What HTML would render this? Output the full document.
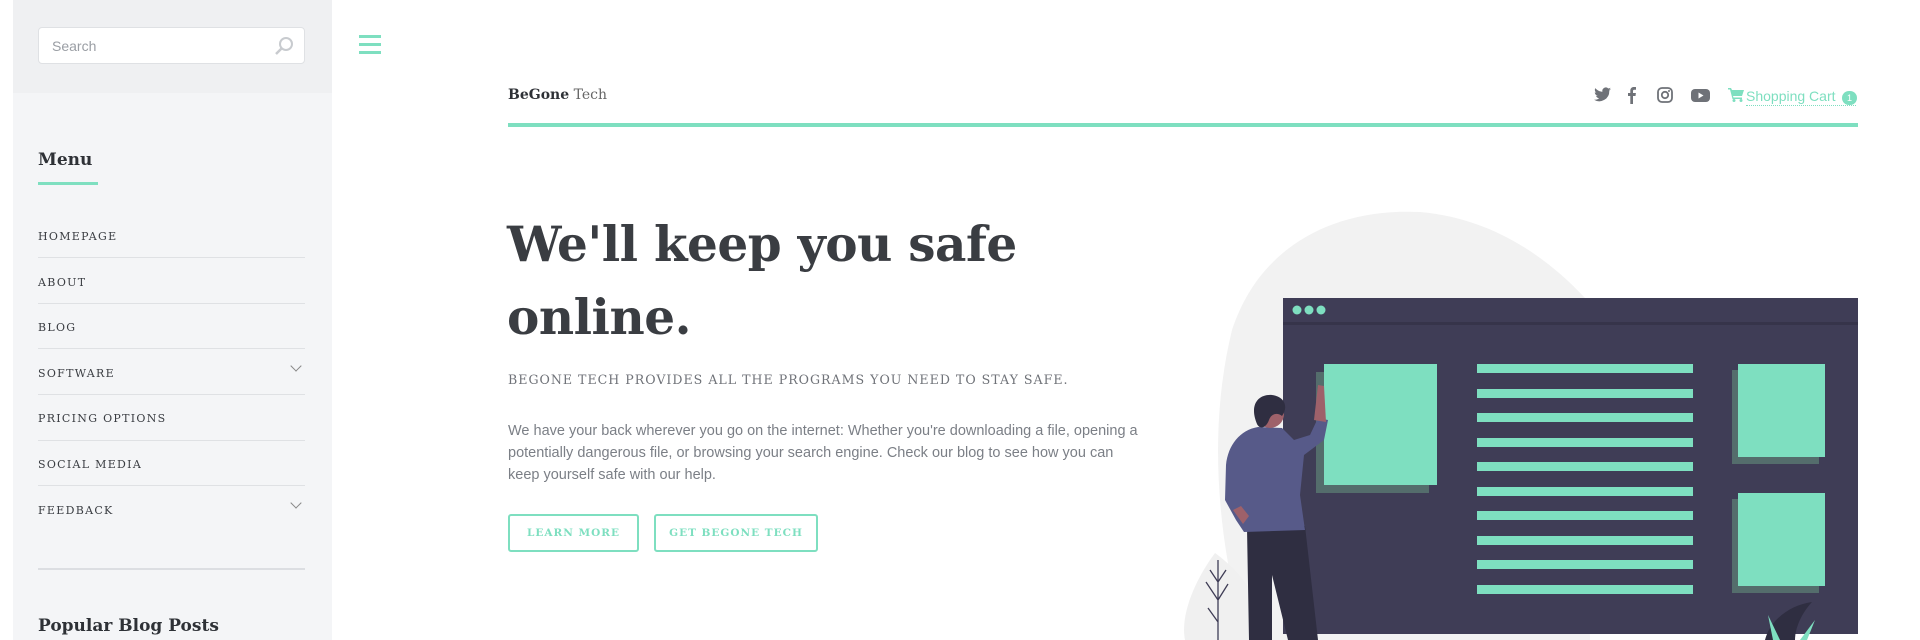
<!DOCTYPE html>
<html><head><meta charset="utf-8"><style>
*{margin:0;padding:0;box-sizing:border-box}
body{width:1920px;height:640px;overflow:hidden;background:#fff;position:relative;font-family:"Liberation Sans",sans-serif}
.a{position:absolute}
.serif{font-family:"DejaVu Serif","Liberation Serif",serif}
.side{left:13px;top:0;width:319px;height:640px;background:#f4f5f7}
.stop{left:13px;top:0;width:319px;height:93px;background:#eff0f2}
.search{left:38px;top:27px;width:267px;height:37px;background:#fff;border:1px solid #dfe1e4;border-radius:4px;font-size:14px;color:#9a9ea4;padding:10px 13px}
.mi{left:38px;font-size:11px;letter-spacing:1.3px;color:#3a3d42}
.sep{left:38px;width:267px;height:1px;background:#dfe1e4}
.chev{left:292px;width:8px;height:8px;border-right:1.5px solid #888;border-bottom:1.5px solid #888;transform:rotate(45deg)}
.ham{left:359px;width:22px;height:3px;background:#7edfc0}
.btn{top:514px;height:38px;border:2px solid #7edfc0;border-radius:3px;color:#7edfc0;font-size:10.5px;font-weight:bold;letter-spacing:1px;text-align:center;line-height:34px}
</style></head><body>
<div class="a side"></div><div class="a stop"></div>
<div class="a search">Search
<svg class="a" style="right:10px;top:8px" width="20" height="20" viewBox="0 0 20 20"><circle cx="12" cy="8" r="6" fill="none" stroke="#c8cbcf" stroke-width="2"/><line x1="8" y1="12" x2="2" y2="18" stroke="#c8cbcf" stroke-width="2.5"/></svg></div>
<div class="a serif" style="left:38px;top:150px;font-size:17px;font-weight:bold;color:#2e3136">Menu</div>
<div class="a" style="left:38px;top:182px;width:60px;height:3px;background:#7edfc0"></div>
<div class="a mi serif" style="top:230px">HOMEPAGE</div><div class="a sep" style="top:257px"></div>
<div class="a mi serif" style="top:276px">ABOUT</div><div class="a sep" style="top:303px"></div>
<div class="a mi serif" style="top:321px">BLOG</div><div class="a sep" style="top:348px"></div>
<div class="a mi serif" style="top:367px">SOFTWARE</div><div class="a chev" style="top:362px"></div><div class="a sep" style="top:394px"></div>
<div class="a mi serif" style="top:412px">PRICING OPTIONS</div><div class="a sep" style="top:440px"></div>
<div class="a mi serif" style="top:458px">SOCIAL MEDIA</div><div class="a sep" style="top:485px"></div>
<div class="a mi serif" style="top:504px">FEEDBACK</div><div class="a chev" style="top:499px"></div>
<div class="a" style="left:38px;top:568px;width:267px;height:2px;background:#dcdee2"></div>
<div class="a serif" style="left:38px;top:616px;font-size:17px;font-weight:bold;color:#2e3136">Popular Blog Posts</div>

<div class="a ham" style="top:35px"></div><div class="a ham" style="top:43px"></div><div class="a ham" style="top:51px"></div>

<div class="a serif" style="left:508px;top:87px;font-size:14px;color:#2e3136"><b>BeGone</b> <span style="color:#666">Tech</span></div>
<svg class="a" style="left:1594px;top:86px" width="120" height="18" viewBox="0 0 120 18" fill="#6f7278">
<path d="M17 3c-.6.3-1.3.5-2 .6.7-.4 1.3-1.1 1.5-1.9-.7.4-1.4.7-2.2.8A3.5 3.5 0 0 0 8.4 5.7C5.5 5.6 3 4.2 1.3 2.1c-.9 1.600-.4 3.6 1.1 4.6-.6 0-1.100-.2-1.600-.4 0 1.700 1.200 3.100 2.800 3.400-.5.1-1 .2-1.600.1.4 1.400 1.700 2.400 3.200 2.400A7 7 0 0 1 0 13.7 10 10 0 0 0 15.3 5v-.5c.7-.4 1.3-1 1.7-1.5z"/>
<path d="M39 18v-8h2.5l.4-3H39V5.2c0-.8.3-1.4 1.4-1.4H42V1.1C41.6 1 40.8 1 39.9 1 37.8 1 36.3 2.3 36.3 4.7V7H34v3h2.3v8z"/>
<rect x="64" y="2" width="14" height="14" rx="4" fill="none" stroke="#6f7278" stroke-width="1.8"/><circle cx="71" cy="9" r="3.2" fill="none" stroke="#6f7278" stroke-width="1.8"/><circle cx="75" cy="5" r="1"/>
<rect x="97" y="3" width="19" height="13" rx="4"/><path d="M104.5 6.5v6l5-3z" fill="#fff"/>
</svg>
<svg class="a" style="left:1728px;top:88px" width="16" height="14" viewBox="0 0 16 14" fill="#7edfc0"><path d="M0 0h3l1 2h12l-2 6H5l.5 1.5H14V11H4.5L2 1.5H0z"/><circle cx="6" cy="12.5" r="1.5"/><circle cx="13" cy="12.5" r="1.5"/></svg>
<div class="a" style="left:1746px;top:88px;font-size:14px;color:#7edfc0;border-bottom:1px dotted #7edfc0;line-height:17px;padding-right:20px">Shopping Cart</div>
<div class="a" style="left:1842px;top:91px;width:15px;height:14px;border-radius:7px;background:#7edfc0;color:#fff;font-size:9px;text-align:center;line-height:14px">1</div>
<div class="a" style="left:508px;top:123px;width:1350px;height:4px;background:#7edfc0"></div>

<div class="a serif" style="left:507px;top:208px;font-size:48.5px;font-weight:bold;color:#3a3d42;line-height:73px;letter-spacing:-0.5px">We'll keep you safe<br>online.</div>
<div class="a serif" style="left:508px;top:372px;font-size:12.6px;letter-spacing:1px;color:#6f7278">BEGONE TECH PROVIDES ALL THE PROGRAMS YOU NEED TO STAY SAFE.</div>
<div class="a" style="left:508px;top:420px;width:640px;font-size:14.5px;line-height:22px;color:#7b7f86">We have your back wherever you go on the internet: Whether you're downloading a file, opening a potentially dangerous file, or browsing your search engine. Check our blog to see how you can keep yourself safe with our help.</div>
<div class="a btn serif" style="left:508px;width:131px">LEARN MORE</div>
<div class="a btn serif" style="left:654px;width:164px">GET BEGONE TECH</div>

<svg class="a" style="left:0;top:0" width="1920" height="640" viewBox="0 0 1920 640">
<path d="M1240 620C1215 520 1210 420 1232 330 1260 245 1335 208 1420 212 1490 218 1545 255 1585 298L1590 640 1250 640z" fill="#f2f2f2"/>
<path d="M1215 553C1195 580 1180 615 1185 640L1262 640C1265 605 1245 575 1215 553z" fill="#f0f0f0"/>
<path d="M1218 640V560M1218 600l-12-18M1218 600l10-16M1218 622l-10-14M1218 582l-8-12M1218 582l8-12" stroke="#3f3d56" stroke-width="1.3" fill="none"/>
<rect x="1283" y="298" width="575" height="336" fill="#3f3d56"/>
<rect x="1283" y="322" width="575" height="3" fill="#36344a"/>
<circle cx="1297" cy="310" r="4.5" fill="#7edfc0"/><circle cx="1309" cy="310" r="4.5" fill="#7edfc0"/><circle cx="1321" cy="310" r="4.5" fill="#7edfc0"/>
<rect x="1316" y="372" width="113" height="121" fill="#546d6c"/><rect x="1324" y="364" width="113" height="121" fill="#7edfc0"/>
<g fill="#7edfc0"><rect x="1477" y="364" width="216" height="9"/><rect x="1477" y="389" width="216" height="9"/><rect x="1477" y="413" width="216" height="9"/><rect x="1477" y="438" width="216" height="9"/><rect x="1477" y="462" width="216" height="9"/><rect x="1477" y="487" width="216" height="9"/><rect x="1477" y="511" width="216" height="9"/><rect x="1477" y="536" width="216" height="9"/><rect x="1477" y="560" width="216" height="9"/><rect x="1477" y="585" width="216" height="9"/></g>
<rect x="1732" y="370" width="87" height="94" fill="#546d6c"/><rect x="1738" y="364" width="87" height="93" fill="#7edfc0"/>
<rect x="1732" y="499" width="87" height="94" fill="#546d6c"/><rect x="1738" y="493" width="87" height="93" fill="#7edfc0"/>
<path d="M1765 640C1770 620 1790 605 1812 602 1800 615 1795 630 1795 640z" fill="#2f2e41"/><path d="M1780 640l-12-25 5 25zM1800 640l15-20-8 20z" fill="#7edfc0"/>
<path d="M1247 528L1249 640 1272 640 1272 575 1288 640 1318 640 1305 526z" fill="#2f2e41"/>
<path d="M1258 427C1240 430 1228 445 1226 465L1225 500 1236 520 1244 532 1305 530 1300 495 1304 455 1324 440 1328 420 1318 418 1310 435 1294 440 1282 428z" fill="#575a89"/>
<path d="M1314 420L1318 385 1324 386 1326 422z" fill="#9e616a"/>
<circle cx="1270" cy="414" r="14" fill="#9e616a"/>
<path d="M1257 424C1249 405 1258 394 1272 395 1286 397 1288 408 1282 416 1277 412 1271 414 1269 420 1266 428 1260 430 1257 424z" fill="#2f2e41"/>
<path d="M1233 510l10 14 6-8-8-10z" fill="#9e616a"/>
</svg>
</body></html>
